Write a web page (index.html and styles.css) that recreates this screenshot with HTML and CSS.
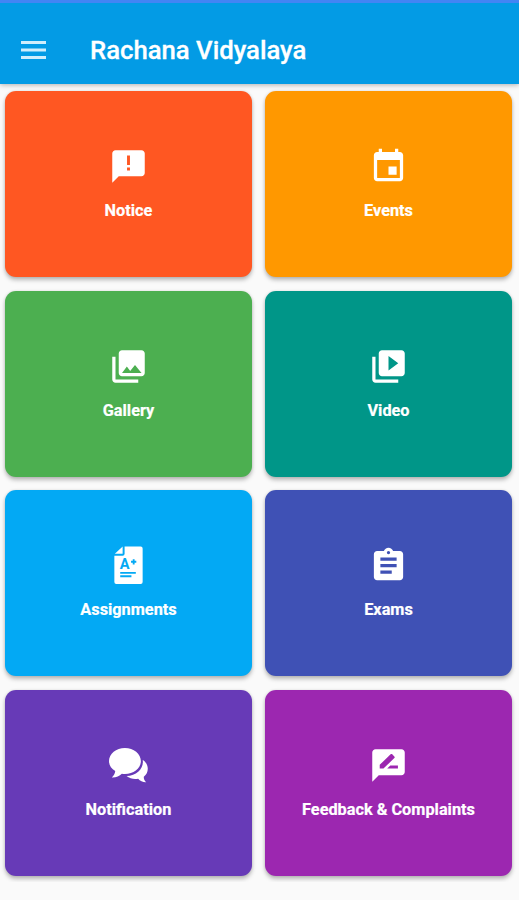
FILE: index.html
```
<!DOCTYPE html>
<html lang="en">
<head>
  <meta charset="UTF-8">
  <meta name="viewport" content="width=device-width, initial-scale=1.0">
  <title>Rachana Vidyalaya</title>
  <link rel="stylesheet" href="styles.css">
</head>
<body>
<!-- Top bar -->
<header class="app-bar">
  <button class="menu-btn" aria-label="Menu">
    <svg viewBox="0 0 25 18"><path d="M0 0h25v3H0zM0 7.500h25v3H0zM0 15h25v3H0z"/></svg>
  </button>
  <h1 class="title">Rachana Vidyalaya</h1>
</header>

<!-- Dashboard -->
<main class="grid">
  <a class="card notice">
    <svg class="icon" viewBox="0 0 24 24"><path d="M20 2H4c-1.100 0-2 .9-2 2v18l4-4h14c1.100 0 2-.9 2-2V4c0-1.100-.9-2-2-2zm-7.100 12.500h-1.800v-1.900h1.800v1.900zm0-3.500h-1.800V5.200h1.800V11z"/></svg>
    <span class="label">Notice</span>
  </a>
  <a class="card events">
    <svg class="icon" viewBox="0 0 24 24"><path d="M17 12h-5v5h5v-5zM16 1v2H8V1H6v2H5c-1.110 0-2 .9-2 2v14c0 1.100.89 2 2 2h14c1.100 0 2-.9 2-2V5c0-1.100-.9-2-2-2h-1V1h-2zm3 18H5V8h14v11z"/></svg>
    <span class="label">Events</span>
  </a>
  <a class="card gallery">
    <svg class="icon" viewBox="0 0 24 24"><path d="M22 16V4c0-1.100-.9-2-2-2H8c-1.100 0-2 .9-2 2v12c0 1.100.9 2 2 2h12c1.100 0 2-.9 2-2zm-11-4l2.030 2.710L16 11l4 5H8l3-4zM2 6v14c0 1.100.9 2 2 2h14v-2H4V6H2z"/></svg>
    <span class="label">Gallery</span>
  </a>
  <a class="card video">
    <svg class="icon" viewBox="0 0 24 24"><path d="M4 6H2v14c0 1.100.9 2 2 2h14v-2H4V6zm16-4H8c-1.100 0-2 .9-2 2v12c0 1.100.9 2 2 2h12c1.100 0 2-.9 2-2V4c0-1.100-.9-2-2-2zm-8 12.500v-9l6 4.500-6 4.500z"/></svg>
    <span class="label">Video</span>
  </a>
  <a class="card assignments">
    <svg class="icon" viewBox="0 0 40 40">
      <path d="M16 .5h16.500q2 0 2 2v34.500q0 2-2 2H7.500q-2 0-2-2V10h8.500q2 0 2-2z"/>
      <path d="M6 8L14 .5V8z"/>
      <text class="grade" x="11" y="24">A</text>
      <path class="cut" d="M25.300 13.500v5.400M22.600 16.200H28M11.500 27.500h16M11.500 31h11.500"/>
    </svg>
    <span class="label">Assignments</span>
  </a>
  <a class="card exams">
    <svg class="icon" viewBox="0 0 24 24"><path d="M19 3h-4.180C14.400 1.840 13.300 1 12 1c-1.300 0-2.400.84-2.820 2H5c-1.100 0-2 .9-2 2v14c0 1.100.9 2 2 2h14c1.100 0 2-.9 2-2V5c0-1.100-.9-2-2-2zm-7 0c.55 0 1 .45 1 1s-.45 1-1 1-1-.45-1-1 .45-1 1-1zm2 14H7v-2h7v2zm3-4H7v-2h10v2zm0-4H7V7h10v2z"/></svg>
    <span class="label">Exams</span>
  </a>
  <a class="card notification">
    <svg class="icon" viewBox="0 0 40 40">
      <path d="M16.300 2C7.400 2 0 8 0 15.500c0 4.500 2.500 7.900 6.400 10.200-.2 2.700-1.500 4.700-3.500 6.500 4.200.2 7.800-1.300 10.300-3.800 1 .2 2 .3 3.100.3 9.100 0 16.400-5.900 16.400-13.300S25.300 2 16.300 2z"/>
      <path d="M34.600 14.300c1.300 8.700-6 16.200-16.600 16.500 3.300 2.700 7.700 3.600 11.900 2.800 2 2.400 4.800 3.700 8.300 3.600-1.700-1.500-2.700-3.500-2.500-5.700 5.700-4.300 5.500-13.200-1.100-17.200z"/>
    </svg>
    <span class="label">Notification</span>
  </a>
  <a class="card feedback">
    <svg class="icon" viewBox="0 0 24 24"><path d="M20 2H4c-1.100 0-2 .9-2 2v18l4-4h14c1.100 0 2-.9 2-2V4c0-1.100-.9-2-2-2zM6.600 13.900v-2.300l6.700-6.500c.3-.3.700-.3 1 0l1.300 1.300c.3.300.3.700 0 1L8.900 13.900H6.600zm11.200 0h-6.600l1.900-1.900h4.700v1.900z"/></svg>
    <span class="label">Feedback &amp; Complaints</span>
  </a>
</main>
</body>
</html>
```
FILE: styles.css
```
* {
  box-sizing: border-box;
}
body {
  margin: 0;
  background: #fafafa;
  font-family: Roboto, "Liberation Sans", sans-serif;
  color: #fff;
}
/* Top bar */
.app-bar {
  position: relative;
  display: flex;
  align-items: center;
  height: 84px;
  padding: 12px 22px 0 21px;
  background: #039be5;
  border-top: 3px solid #4285f4;
  box-shadow: 0 1px 5px rgba(0, 0, 0, 0.3);
}
.menu-btn {
  width: 25px;
  height: 18px;
  padding: 0;
  border: none;
  background: none;
}
.menu-btn svg {
  display: block;
  width: 25px;
  height: 18px;
  fill: #d0eefc;
}
.title {
  margin: 1px 0 0 44px;
  font-size: 25.7px;
  font-weight: 500;
  line-height: 30px;
  white-space: nowrap;
  -webkit-text-stroke: 0.3px #fff;
}
/* Cards */
.grid {
  display: grid;
  grid-template-columns: 247px 247px;
  grid-auto-rows: 186px;
  gap: 13.5px 13px;
  padding: 7.4px 0 6px 5px;
}
.card {
  display: flex;
  flex-direction: column;
  align-items: center;
  padding-top: 56px;
  border-radius: 11px;
  box-shadow: 0 3px 4px rgba(0, 0, 0, 0.26), 0 0 3px rgba(0, 0, 0, 0.1);
}
.icon {
  width: 39px;
  height: 39px;
  margin-right: 1px;
  fill: #fff;
}
.label {
  margin-top: 14.7px;
  font-size: 16.3px;
  font-weight: 700;
  line-height: 20px;
  white-space: nowrap;
  -webkit-text-stroke: 0.2px #fff;
}
.notice { background: #ff5722; }
.events { background: #ff9800; }
.gallery { background: #4caf50; }
.video { background: #009688; }
.assignments { background: #03a9f4; }
.exams { background: #3f51b5; }
.notification { background: #673ab7; }
.feedback { background: #9c27b0; }

.grade {
  fill: #03a9f4;
  font-size: 15px;
  font-weight: 700;
}
.cut {
  fill: none;
  stroke: #03a9f4;
  stroke-width: 1.9;
}
```
